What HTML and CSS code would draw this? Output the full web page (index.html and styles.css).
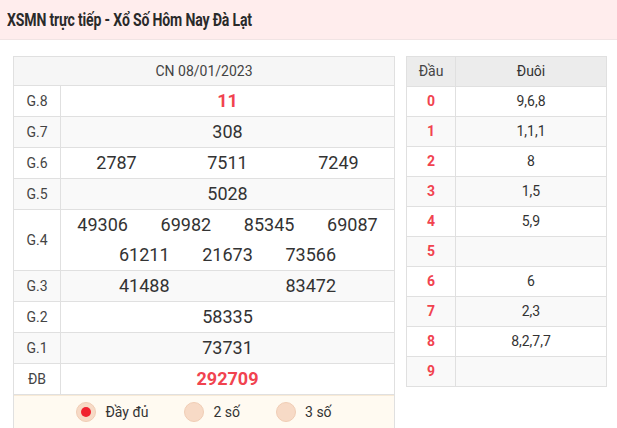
FILE: index.html
```html
<!DOCTYPE html>
<html lang="vi">
<head>
<meta charset="utf-8">
<title>XSMN trực tiếp</title>
<link rel="stylesheet" href="styles.css">
</head>
<body>
<div class="page-title"><h1>XSMN trực tiếp - Xổ Số Hôm Nay Đà Lạt</h1></div>
<div class="content">
  <div class="results">
    <div class="res-head">CN 08/01/2023</div>
    <div class="row"><div class="lbl">G.8</div><div class="val"><span class="num n1 red">11</span></div></div>
    <div class="row alt"><div class="lbl">G.7</div><div class="val"><span class="num n1">308</span></div></div>
    <div class="row"><div class="lbl">G.6</div><div class="val"><span class="num n3">2787</span><span class="num n3">7511</span><span class="num n3">7249</span></div></div>
    <div class="row alt"><div class="lbl">G.5</div><div class="val"><span class="num n1">5028</span></div></div>
    <div class="row"><div class="lbl">G.4</div><div class="val"><span class="num n4">49306</span><span class="num n4">69982</span><span class="num n4">85345</span><span class="num n4">69087</span><span class="num n4">61211</span><span class="num n4">21673</span><span class="num n4">73566</span></div></div>
    <div class="row alt"><div class="lbl">G.3</div><div class="val"><span class="num n2">41488</span><span class="num n2">83472</span></div></div>
    <div class="row"><div class="lbl">G.2</div><div class="val"><span class="num n1">58335</span></div></div>
    <div class="row alt"><div class="lbl">G.1</div><div class="val"><span class="num n1">73731</span></div></div>
    <div class="row"><div class="lbl">ĐB</div><div class="val"><span class="num n1 red special">292709</span></div></div>
    <div class="options">
      <label class="opt"><span class="radio checked"></span>Đầy đủ</label>
      <label class="opt"><span class="radio"></span>2 số</label>
      <label class="opt"><span class="radio"></span>3 số</label>
    </div>
  </div>
  <div class="loto">
    <div class="lrow lhead"><div class="dau">Đầu</div><div class="duoi">Đuôi</div></div>
    <div class="lrow"><div class="dau red-b">0</div><div class="duoi">9,6,8</div></div>
    <div class="lrow alt"><div class="dau red-b">1</div><div class="duoi">1,1,1</div></div>
    <div class="lrow"><div class="dau red-b">2</div><div class="duoi">8</div></div>
    <div class="lrow alt"><div class="dau red-b">3</div><div class="duoi">1,5</div></div>
    <div class="lrow"><div class="dau red-b">4</div><div class="duoi">5,9</div></div>
    <div class="lrow alt"><div class="dau red-b">5</div><div class="duoi"></div></div>
    <div class="lrow"><div class="dau red-b">6</div><div class="duoi">6</div></div>
    <div class="lrow alt"><div class="dau red-b">7</div><div class="duoi">2,3</div></div>
    <div class="lrow"><div class="dau red-b">8</div><div class="duoi">8,2,7,7</div></div>
    <div class="lrow alt"><div class="dau red-b">9</div><div class="duoi"></div></div>
  </div>
</div>
</body>
</html>
```
FILE: styles.css
```css
* { box-sizing: border-box; }
html, body { margin: 0; padding: 0; background: #fff; }
body { font-family: Roboto, "Liberation Sans", sans-serif; color: #333; width: 617px; height: 428px; overflow: hidden; }

.page-title { height: 40px; background: #ffeded; border-bottom: 1px solid #f1e4e4; padding: 0 0 1px 7px; display: flex; align-items: center; }
.page-title h1 { margin: 0; font-size: 18px; font-weight: 700; color: #2a2a2a; font-family: Roboto, sans-serif; letter-spacing: -0.2px; transform: scaleX(0.78); transform-origin: left center; white-space: nowrap; }

.content { display: flex; align-items: flex-start; gap: 11px; padding: 16px 0 0 13px; }

.results { width: 382px; border: 1px solid #e0e0e0; border-bottom: none; }
.res-head { height: 29px; border-bottom: 1px solid #e0e0e0; background: #f6f6f6; display: flex; align-items: center; justify-content: center; font-size: 14px; color: #444; padding-bottom: 1px; }
.row { display: flex; border-bottom: 1px solid #e0e0e0; background: #fff; }
.row.alt { background: #f9f9f9; }
.lbl { width: 47px; border-right: 1px solid #e0e0e0; display: flex; align-items: center; justify-content: center; font-size: 14px; color: #444; padding-bottom: 1px; }
.val { flex: 1; display: flex; flex-wrap: wrap; justify-content: center; }
.num { height: 30px; display: flex; align-items: center; justify-content: center; font-size: 18px; color: #333; padding-bottom: 2px; }
.n1 { width: 100%; }
.n2 { width: 50%; }
.n3 { width: 33.333%; }
.n4 { width: 25%; }
.num.red { color: #f1434f; font-weight: 700; }
.num.special { font-size: 18px; }

.options { height: 34px; background: #fffaf1; border-top: 1px solid #f8ead6; display: flex; align-items: center; justify-content: center; font-size: 14px; color: #333; padding-bottom: 2px; }
.opt { display: flex; align-items: center; gap: 9px; margin: 0 18px; }
.radio { width: 20px; height: 20px; border-radius: 50%; background: #f7dac6; border: 1px solid #f0cdb5; display: flex; align-items: center; justify-content: center; }
.radio.checked::after { content: ""; width: 10px; height: 10px; border-radius: 50%; background: #f0222f; }

.loto { width: 201px; border: 1px solid #e0e0e0; border-bottom: none; }
.lrow { display: flex; height: 30px; border-bottom: 1px solid #e0e0e0; background: #fff; font-size: 14px; }
.lrow.alt { background: #f9f9f9; }
.lrow.lhead { background: #ececec; color: #444; }
.dau { width: 49px; border-right: 1px solid #e0e0e0; display: flex; align-items: center; justify-content: center; padding-bottom: 1px; }
.duoi { flex: 1; display: flex; align-items: center; justify-content: center; color: #333; padding-bottom: 1px; }
.red-b { color: #f1434f; font-weight: 700; }
```
